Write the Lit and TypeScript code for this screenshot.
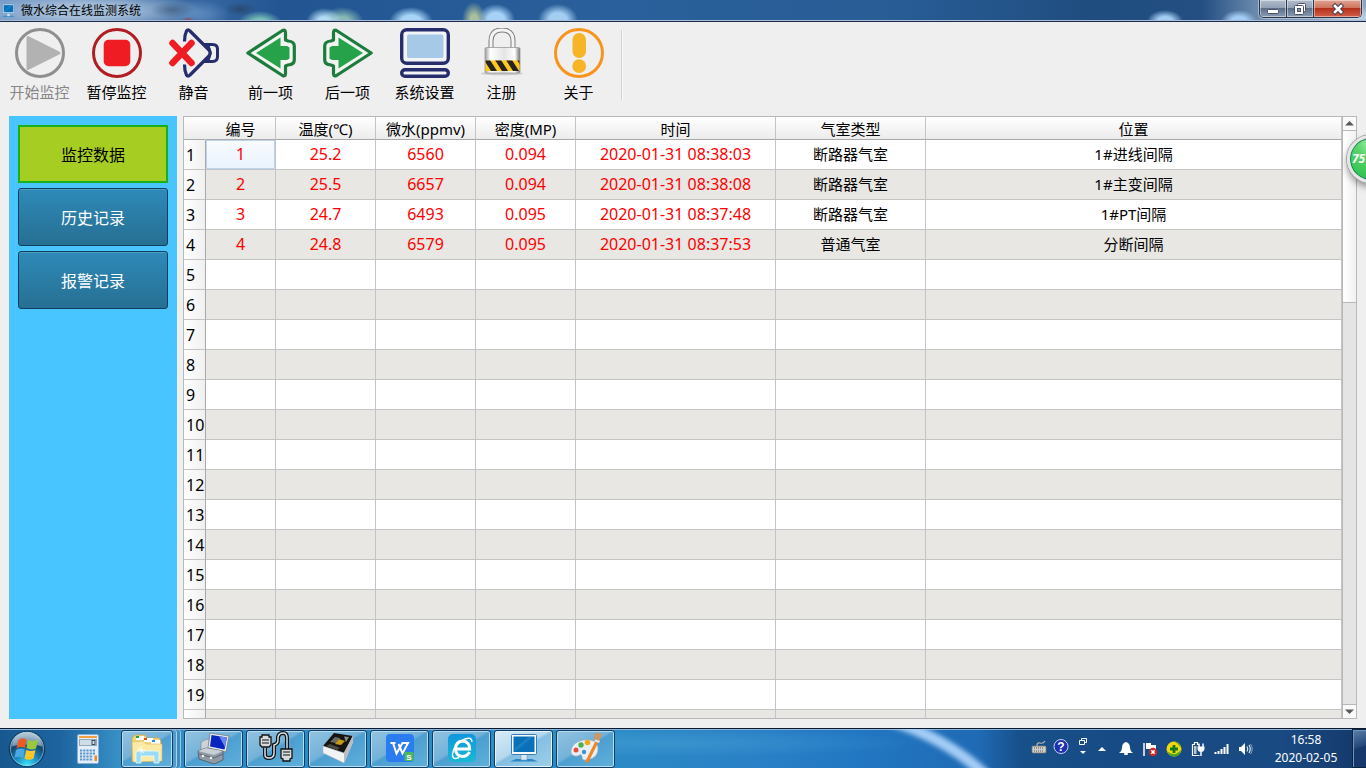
import { LitElement, html, css, svg, nothing } from "lit";
import { customElement, state } from "lit/decorators.js";
import { classMap } from "lit/directives/class-map.js";

interface Reading {
  id: string;
  temperature: string;
  moisture: string;
  density: string;
  time: string;
  chamber: string;
  place: string;
}

const READINGS: Reading[] = [
  { id: "1", temperature: "25.2", moisture: "6560", density: "0.094", time: "2020-01-31 08:38:03", chamber: "断路器气室", place: "1#进线间隔" },
  { id: "2", temperature: "25.5", moisture: "6657", density: "0.094", time: "2020-01-31 08:38:08", chamber: "断路器气室", place: "1#主变间隔" },
  { id: "3", temperature: "24.7", moisture: "6493", density: "0.095", time: "2020-01-31 08:37:48", chamber: "断路器气室", place: "1#PT间隔" },
  { id: "4", temperature: "24.8", moisture: "6579", density: "0.095", time: "2020-01-31 08:37:53", chamber: "普通气室", place: "分断间隔" },
];

const ROW_COUNT = 20;

const arrowShape = svg`
  <path d="M1.8 25 L36.5 2.5 Q39.5 1 39.5 4.5 V12 L42 13 Q48.3 13.5 48.3 18 V32 Q48.3 36.5 42 37 L39.5 38 V45.5 Q39.5 49 36.5 47.5 Z" fill="#f2f4f2" stroke="#1e7b3e" stroke-width="3.2" stroke-linejoin="round"/>
  <path d="M10 25 L34.5 9.5 V18 H41 L43.5 19.5 V30.5 L41 32 H34.5 V40.5 Z" fill="#26a24a"/>`;

const monitorShape = svg`
  <path d="M8 26 H24 L30 28.500 H2 Z" fill="#2a86c8"/>
  <rect x="13" y="21" width="6" height="6" fill="#dbe9f3" stroke="#6f9fc4" stroke-width=".6"/>
  <rect x="3.500" y="1.500" width="25" height="20" rx="1" fill="#f6fafc" stroke="#3a7db4"/>
  <rect x="5.500" y="3.500" width="21" height="15.500" fill="#0a70b8"/>
  <path d="M6 16 L20 4 H25 L8 18 Z" fill="#3a98d8" opacity=".35"/>`;

const toolIcons = {
  play: svg`
    <circle cx="25" cy="25" r="23.500" fill="#efefef" stroke="#8f8f8f" stroke-width="3"/>
    <path d="M13 9.500 L44 25 L13 40.500 Z" fill="#b2b2b2" stroke="#b2b2b2" stroke-width="3" stroke-linejoin="round"/>`,
  stop: svg`
    <circle cx="25" cy="25" r="23.500" fill="#efefef" stroke="#b01e24" stroke-width="3"/>
    <rect x="11.700" y="11.700" width="26.600" height="26.600" rx="5" fill="#f01c24"/>`,
  mute: svg`
    <path d="M35 16.500 H43.500 Q48.500 16.500 48.500 21 V28.500 Q48.500 33.500 43.500 33.500 H35" fill="none" stroke="#262d6c" stroke-width="3"/>
    <path d="M39 17 Q43 25 39 33" fill="none" stroke="#262d6c" stroke-width="2.500"/>
    <path d="M15.500 13.500 Q15.500 7 17.500 3 Q19 .8 21 3 L40 22 Q42.500 25 40 28 L21 47 Q19 49.200 17.500 47 Q15.500 43 15.500 36.500" fill="#efefef" stroke="#262d6c" stroke-width="3.200" stroke-linejoin="round"/>
    <path d="M3.500 15 L22.500 35 M22.500 15 L3.500 35" stroke="#f01c24" stroke-width="6.500" stroke-linecap="round"/>`,
  prev: arrowShape,
  next: svg`<g transform="translate(50 0) scale(-1 1)">${arrowShape}</g>`,
  settings: svg`
    <rect x="1.700" y="1.700" width="46.600" height="33.600" rx="5" fill="#f2f4f6" stroke="#262d6c" stroke-width="3.400"/>
    <rect x="7" y="6.500" width="36.500" height="23.500" rx="2" fill="#a6c9e7"/>
    <rect x="1.700" y="41.700" width="46.600" height="6.600" rx="3.300" fill="#f2f4f6" stroke="#262d6c" stroke-width="3.400"/>`,
  lock: svg`
    <defs>
      <linearGradient id="body" x1="0" x2="1"><stop offset="0" stop-color="#9c9c9c"/><stop offset=".15" stop-color="#fff"/><stop offset=".55" stop-color="#e4e4e4"/><stop offset=".85" stop-color="#fff"/><stop offset="1" stop-color="#707070"/></linearGradient>
      <clipPath id="band"><rect x="8.500" y="32.500" width="34" height="10.500"/></clipPath>
    </defs>
    <ellipse cx="25" cy="45.500" rx="21" ry="1.800" fill="#c9c9c9"/>
    <path d="M14 20 V13 Q14 2 25 2 Q36 2 36 13 V20" fill="none" stroke="#7d7d7d" stroke-width="5"/>
    <path d="M14 20 V13 Q14 2 25 2 Q36 2 36 13 V20" fill="none" stroke="#f4f4f4" stroke-width="3"/>
    <rect x="8" y="19.500" width="35" height="25.500" rx="1.500" fill="url(#body)" stroke="#9a9a9a" stroke-width=".8"/>
    <g clip-path="url(#band)">
      <rect x="8" y="32" width="36" height="12" fill="#ffc81a"/>
      <path d="M7 32 h6 l7 11 h-6 Z M18 32 h6 l7 11 h-6 Z M29 32 h6 l7 11 h-6 Z M40 32 h6 l7 11 h-6 Z M3 38 l5 7 h-6 Z" fill="#262320"/>
    </g>`,
  about: svg`
    <circle cx="25" cy="25" r="23.500" fill="#efefef" stroke="#f7941e" stroke-width="3"/>
    <rect x="18.500" y="5" width="13.500" height="25" rx="6.700" fill="#f6b426"/>
    <circle cx="25.200" cy="38.200" r="6.900" fill="#f6b426"/>`,
};

const TOOLS: { label: string; icon: keyof typeof toolIcons; disabled?: boolean }[] = [
  { label: "开始监控", icon: "play", disabled: true },
  { label: "暂停监控", icon: "stop" },
  { label: "静音", icon: "mute" },
  { label: "前一项", icon: "prev" },
  { label: "后一项", icon: "next" },
  { label: "系统设置", icon: "settings" },
  { label: "注册", icon: "lock" },
  { label: "关于", icon: "about" },
];

@customElement("title-bar")
class TitleBar extends LitElement {
  static styles = css`
    :host {
      display: flex;
      flex: none;
      justify-content: space-between;
      height: 22px;
      box-sizing: border-box;
      border-bottom: 1px solid #1b2b49;
      box-shadow: inset 0 -1px #a9bdd8;
      background:
        radial-gradient(ellipse 38px 12px at 1356px 18px, #b9cde2 20%, transparent),
        radial-gradient(ellipse 18px 11px at 1165px 21px, #a3cdf4 40%, transparent),
        radial-gradient(ellipse 18px 11px at 1239px 21px, #a3cdf4 40%, transparent),
        radial-gradient(ellipse 18px 14px at 324px 22px, #b1dcf3 35%, transparent),
        radial-gradient(ellipse 22px 15px at 342px 22px, #86b9b3 35%, transparent),
        radial-gradient(ellipse 22px 15px at 411px 22px, #a6d5f7 45%, transparent),
        radial-gradient(ellipse 12px 18px at 474px 20px, #a9bf9d 30%, transparent),
        radial-gradient(ellipse 19px 16px at 496px 20px, #a6d2f7 45%, transparent),
        radial-gradient(ellipse 20px 16px at 558px 20px, #a3cdf1 45%, transparent),
        radial-gradient(ellipse 22px 12px at 260px 23px, #78bfb6 35%, transparent),
        radial-gradient(ellipse 16px 7px at 240px 9px, #28415f99 10%, transparent),
        radial-gradient(ellipse 7px 4px at 188px 21px, #9c4260 20%, transparent),
        radial-gradient(ellipse 22px 8px at 172px 10px, #35506f88 10%, transparent),
        radial-gradient(ellipse 30px 14px at 200px 14px, #6b98cb99 20%, transparent),
        radial-gradient(ellipse 120px 20px at 85px 11px, #a3bcd8 35%, transparent),
        linear-gradient(90deg, #6d95c4 0, #225592 280px, #2a609b 45%, #285d96 65%, #204d80 80%, #234f83 88%, #7d98b8 93%, #8ba6c4);
    }
    .title {
      display: flex;
      align-items: center;
      gap: 5px;
      padding-left: 1px;
      font-size: 12px;
      line-height: 18px;
      color: #000;
    }
    .controls {
      display: flex;
      height: 18px;
      margin-right: 4px;
      border: 1px solid #2b3648;
      border-top: 0;
      border-radius: 0 0 5px 5px;
      overflow: hidden;
      box-sizing: border-box;
      box-shadow: 0 0 0 1px #d0dae688;
    }
    .control {
      width: 27px;
      padding: 0;
      border: 0;
      border-right: 1px solid #2b3648;
      box-shadow: inset 0 0 0 1px #ffffff70;
      background: linear-gradient(#b1bccb 0, #93a2b6 45%, #5c6f89 50%, #8b9db5);
      display: grid;
      place-items: center;
    }
    .close {
      width: 47px;
      border-right: 0;
      background: linear-gradient(#e0a493 0, #cf7460 45%, #b4301a 50%, #d2604a);
    }
  `;

  render() {
    return html`
      <span class="title">
        <svg width="15" height="15" viewBox="0 0 32 30">${monitorShape}</svg>
        <span>微水综合在线监测系统</span>
      </span>
      <div class="controls">
        <button class="control" aria-label="最小化">
          <svg width="14" height="14" viewBox="0 0 14 14"><rect x="1.500" y="7.500" width="11" height="4" rx="1" fill="#fff" stroke="#4a5261"/></svg>
        </button>
        <button class="control" aria-label="还原">
          <svg width="14" height="14" viewBox="0 0 14 14">
            <rect x="4.500" y="1.500" width="8" height="8" rx="1" fill="#fff" stroke="#4a5261"/>
            <rect x="1.500" y="3.500" width="9" height="9" rx="1" fill="#fff" stroke="#4a5261"/>
            <rect x="4.500" y="6.500" width="3" height="3" fill="#8b9db5" stroke="#4a5261"/>
          </svg>
        </button>
        <button class="control close" aria-label="关闭">
          <svg width="14" height="14" viewBox="0 0 14 14">
            <path d="M4 4 L10 10 M10 4 L4 10" stroke="#4a4450" stroke-width="4.600" stroke-linecap="square"/>
            <path d="M4 4 L10 10 M10 4 L4 10" stroke="#fff" stroke-width="2.600" stroke-linecap="square"/>
          </svg>
        </button>
      </div>
    `;
  }
}

@customElement("tool-bar")
class ToolBar extends LitElement {
  static styles = css`
    :host {
      display: flex;
      flex: none;
      align-items: flex-start;
      padding: 6px 1px 13px;
    }
    .tool {
      display: flex;
      flex-direction: column;
      align-items: center;
      gap: 3px;
      width: 77px;
      padding: 0;
      border: 0;
      background: none;
      font: inherit;
      font-size: 15px;
      line-height: 22px;
      color: #000;
      white-space: nowrap;
    }
    .tool:disabled {
      color: #868686;
    }
    .separator {
      width: 1px;
      height: 70px;
      margin: 2px 0 0 4px;
      background: #d2d2d2;
      border-right: 1px solid #fafafa;
    }
  `;

  render() {
    return html`
      ${TOOLS.map(
        (tool) => html`
          <button class="tool" ?disabled=${tool.disabled ?? false}>
            <svg width="50" height="50" viewBox="0 0 50 50">${toolIcons[tool.icon]}</svg>
            <span>${tool.label}</span>
          </button>
        `,
      )}
      <span class="separator"></span>
    `;
  }
}

@customElement("side-nav")
class SideNav extends LitElement {
  static styles = css`
    :host {
      display: block;
      background: #48c5ff;
      padding: 9px;
    }
    .list {
      display: flex;
      flex-direction: column;
      gap: 5px;
    }
    .entry {
      height: 58px;
      padding: 2px 0 0;
      border: 1px solid #0e3f5e;
      border-radius: 3px;
      background: linear-gradient(#2e8ab8, #276f93);
      box-shadow: inset 0 1px #4c9cc3;
      font: inherit;
      font-size: 16px;
      line-height: 22px;
      color: #fff;
    }
    .active {
      border: 2px solid #16b11c;
      border-radius: 0;
      background: #a6cd22;
      box-shadow: none;
      color: #000;
    }
  `;

  @state() private active = 0;

  render() {
    return html`
      <nav class="list">
        ${["监控数据", "历史记录", "报警记录"].map(
          (label, index) => html`
            <button
              class=${classMap({ entry: true, active: index === this.active })}
              @click=${() => (this.active = index)}
            >${label}</button>
          `,
        )}
      </nav>
    `;
  }
}

@customElement("reading-grid")
class ReadingGrid extends LitElement {
  static styles = css`
    :host {
      display: flex;
      min-width: 0;
      border: 1px solid #b8b8b8;
      overflow: hidden;
      background: #fff;
    }
    .viewport {
      flex: 1;
      min-width: 0;
      overflow: hidden;
    }
    .table {
      width: 100%;
      table-layout: fixed;
      border-collapse: separate;
      border-spacing: 0;
      font-size: 15px;
      line-height: 22px;
      color: #000;
    }
    .table th,
    .table td {
      box-sizing: border-box;
      padding: 0 0 2px;
      border-right: 1px solid #c4c4c4;
      border-bottom: 1px solid #c4c4c4;
      font-weight: normal;
      text-align: center;
      white-space: nowrap;
    }
    .table .head {
      height: 23px;
      padding: 1px 0 0;
      line-height: 20px;
      border-bottom-color: #a9a9a9;
      background: linear-gradient(#fff, #ececec);
    }
    .table .corner {
      border-right-color: transparent;
    }
    .row {
      height: 30px;
    }
    .row:nth-child(even) {
      background: #e8e7e3;
    }
    .table .index {
      padding: 0 0 0 2px;
      border-right-color: #a9a9a9;
      background: linear-gradient(90deg, #fff, #f0f0f0);
      font-size: 16px;
      text-align: left;
    }
    .table .value {
      font-size: 16px;
      color: #f00;
    }
    .table .focused {
      background: linear-gradient(#f9fcff, #e9f2fc);
      box-shadow: inset 0 0 0 1px #bcd4ee;
    }
    .c-index { width: 22px; }
    .c-id { width: 70px; }
    .c-small { width: 100px; }
    .c-time { width: 200px; }
    .c-type { width: 150px; }
    .scrollbar {
      display: flex;
      flex-direction: column;
      flex: none;
      width: 13px;
      border-left: 1px solid #b8b8b8;
      background: #e4e4e4;
    }
    .step {
      display: grid;
      place-items: center;
      height: 13px;
      padding: 0;
      border: 0;
      background: #fafafa;
    }
    .track {
      flex: 1;
      border-top: 1px solid #b8b8b8;
      border-bottom: 1px solid #b8b8b8;
    }
    .thumb {
      height: 30%;
      box-sizing: border-box;
      border-bottom: 1px solid #b8b8b8;
      background: linear-gradient(90deg, #fff, #f1f1f1);
    }
  `;

  render() {
    const rows = Array.from({ length: ROW_COUNT }, (_, i) => READINGS[i]);
    return html`
      <div class="viewport">
        <table class="table">
          <colgroup>
            <col class="c-index" /><col class="c-id" /><col class="c-small" /><col class="c-small" />
            <col class="c-small" /><col class="c-time" /><col class="c-type" /><col />
          </colgroup>
          <thead>
            <tr>
              <td class="head corner"></td>
              ${["编号", "温度(℃)", "微水(ppmv)", "密度(MP)", "时间", "气室类型", "位置"].map(
                (name) => html`<th class="head" scope="col">${name}</th>`,
              )}
            </tr>
          </thead>
          <tbody>
            ${rows.map(
              (r, i) => html`
                <tr class="row">
                  <th class="index" scope="row">${i < ROW_COUNT - 1 ? i + 1 : nothing}</th>
                  <td class=${classMap({ value: true, focused: i === 0 })}>${r?.id}</td>
                  <td class="value">${r?.temperature}</td>
                  <td class="value">${r?.moisture}</td>
                  <td class="value">${r?.density}</td>
                  <td class="value">${r?.time}</td>
                  <td>${r?.chamber}</td>
                  <td>${r?.place}</td>
                </tr>
              `,
            )}
          </tbody>
        </table>
      </div>
      <div class="scrollbar">
        <button class="step" aria-label="向上滚动">
          <svg width="9" height="5" viewBox="0 0 9 5"><path d="M0 4.500 L4.500 0 L9 4.500 Z" fill="#5a5a5a"/></svg>
        </button>
        <div class="track"><div class="thumb"></div></div>
        <button class="step" aria-label="向下滚动">
          <svg width="9" height="5" viewBox="0 0 9 5"><path d="M0 .5 L4.500 5 L9 .5 Z" fill="#5a5a5a"/></svg>
        </button>
      </div>
    `;
  }
}

const calculatorIcon = svg`
  <rect x="5.500" y="1.500" width="21" height="29" rx="1.500" fill="#e3eefa" stroke="#86aed8"/>
  <rect x="7" y="3" width="18" height="2" fill="#f0a040"/>
  <rect x="7.500" y="6.500" width="17" height="6" fill="#cfdde8" stroke="#8fa7bd"/>
  <rect x="20" y="7.500" width="3" height="4" fill="none" stroke="#3c4e62"/>
  <path d="M8 17.500 H24 M8 20.500 H24 M8 23.500 H21 M8 26.500 H21" stroke="#5c92cc" stroke-width="2" stroke-dasharray="2.200 1"/>
  <rect x="22.500" y="22.500" width="2.500" height="5.500" fill="#f08a1c"/>`;

const taskIcons = [
  {
    label: "资源管理器",
    art: svg`
      <path d="M1 5 L4 2 H14 L16 5 H28 L30 8 V28 H1 Z" fill="#f3d67c" stroke="#c9a248" stroke-width=".7"/>
      <rect x="5" y="3" width="8" height="4" fill="#fff"/><rect x="5" y="3" width="3" height="2" fill="#18a838"/>
      <rect x="13" y="5" width="9" height="4" fill="#fff"/><rect x="13" y="5" width="3" height="2" fill="#e04a20"/>
      <rect x="20" y="7" width="9" height="4" fill="#fff"/><rect x="21" y="7" width="3" height="2" fill="#2a90e0"/>
      <path d="M1 9 L12 8 L15 11 H31 V28 L2 29 Z" fill="#fbeaa6" stroke="#d8b65c" stroke-width=".6"/>
      <path d="M5 30 V20 Q5 18 8 18 H25 Q28 18 28 20 V30 H23 V23 H10 V30 Z" fill="#9bdcf5" stroke="#e8fbff" stroke-width=".8"/>
      <path d="M10 13 V21 M6 17 H14 M7 14 L13 20" stroke="#fff" stroke-width=".8"/>`,
  },
  {
    label: "系统工具",
    art: svg`
      <path d="M3 9 L9 6 L12 8 V20 L3 19 Z" fill="#cfd3d8" stroke="#7b8490" stroke-width=".6"/>
      <path d="M12 0 L31 3 L28 19 L10 15 Z" fill="#e6eaee" stroke="#66707c" stroke-width=".7"/>
      <path d="M13.500 2 L29 4.500 L26.500 16.500 L12 13.500 Z" fill="#0a24c0"/>
      <path d="M21 3.200 L29 4.500 L27 14 Z" fill="#6a86f0"/>
      <path d="M0 18 L8 15 L25 18 V27 L16 31 L1 26 Z" fill="#8f9aa5" stroke="#4f5962" stroke-width=".8"/>
      <path d="M0 18 L8 15 L25 18 L16 22 Z" fill="#c8d0d6"/>
      <path d="M1 21 L16 25 L25 21" fill="none" stroke="#5a656e"/><circle cx="5" cy="23" r="1.300" fill="#e8ecef"/><circle cx="13" cy="25" r="1.300" fill="#e8ecef"/>`,
  },
  {
    label: "串口连接",
    art: svg`
      <path d="M5 15 V22 Q5 25 9 25 Q14 25 14 20 V12 Q18 11 18 7 V4 Q19 0 23 0 Q27 0 27 5 V16" fill="none" stroke="#111" stroke-width="4"/>
      <path d="M5 15 V22 Q5 25 9 25 Q14 25 14 20 V12 Q18 11 18 7 V4 Q19 0 23 0 Q27 0 27 5 V16" fill="none" stroke="#d9e2e8" stroke-width="1.500"/>
      <path d="M2 2 H9 V4 H11 V12 L9 14 H2 L0 12 V4 H2 Z" fill="#d8dadc" stroke="#111" stroke-width="1.300"/>
      <path d="M2 7 H9 M2 10 H9" stroke="#111"/>
      <path d="M21 16 H32 V25 L30 26 V28 H23 V26 L21 25 Z" fill="#d8dadc" stroke="#111" stroke-width="1.300"/>
      <path d="M23 19 H30 M23 22 H30" stroke="#111"/>`,
  },
  {
    label: "芯片工具",
    art: svg`
      <path d="M1 13 L12 0 L31 3 L22 20 Z" fill="#17140f"/>
      <path d="M1 13 L22 20 L31 3 V9 L22 30 L1 20 Z" fill="#f2f3f4" stroke="#a8acb0" stroke-width=".5"/>
      <path d="M22 20 L31 3 V9 L22 30 Z" fill="#b9bdc1"/>
      <path d="M8 9 L13 4 L18 5 L14 10 Z" fill="#6a6a66"/><path d="M13 11 L17 6 L23 8 L19 12 Z" fill="#c79a1c"/>
      <path d="M22 3.500 L27 4 L24 9 Z" fill="#8d8d88"/><path d="M4 13 L8 11 L18 15 L15 17 Z" fill="#4b4a45"/>`,
  },
  {
    label: "WPS 表格",
    art: svg`
      <rect x="2" y="1" width="28" height="28" rx="4" fill="#2a7cf0"/>
      <path d="M6.500 10 H11.500 M9 10 L12.500 20.500 L18.500 10 H24 L18.500 20.500 L14.500 11" fill="none" stroke="#fff" stroke-width="2"/>
      <rect x="20.500" y="19" width="9" height="9" rx="1" fill="#4cb85a"/>
      <text x="25" y="26.500" font-size="8" font-weight="bold" font-family="Liberation Sans, sans-serif" text-anchor="middle" fill="#fff">S</text>`,
  },
  {
    label: "浏览器",
    art: svg`
      <defs><linearGradient id="ie" x1="0" y1="0" x2="0" y2="1"><stop offset="0" stop-color="#1096dc"/><stop offset="1" stop-color="#18b9d4"/></linearGradient></defs>
      <rect x="2" y="1" width="28" height="28" rx="5" fill="url(#ie)"/>
      <path d="M23.500 19 Q21 23.500 16.500 23.500 Q9.500 23 9.500 15.500 Q10 8.500 16.500 8 Q23.500 8.500 23.700 16 H11" fill="none" stroke="#fff" stroke-width="3"/>
      <path d="M26 9 Q26 3.500 19 6 Q8 11 6.500 21 Q6 27.500 13 24.500" fill="none" stroke="#fff" stroke-width="1.400"/>`,
  },
  { label: "微水监测", art: monitorShape, current: true },
  {
    label: "画图",
    art: svg`
      <path d="M13 7 Q26 5 28 14 Q29 25 17 27 Q12 28 12 24 Q12 20 8 23 Q0 24 1 17 Q3 9 13 7 Z" fill="#e8f0f6" stroke="#93acc0" stroke-width=".8"/>
      <circle cx="6" cy="17" r="2.500" fill="#e64c3c"/><circle cx="11" cy="12" r="2.700" fill="#4cb04c"/><circle cx="17.500" cy="9.500" r="2.800" fill="#f0a81c"/><circle cx="14" cy="19" r="2.200" fill="#3c94d4"/>
      <path d="M26 7 L29 8 L18 30 L15 29 Z" fill="#ee8526"/><path d="M24 8 L24 1 Q28 -1 32 1 Q30 5 29.500 9 Z" fill="#c89a6a"/><path d="M25 6.500 L30 8 L29 10 L24.500 8.500 Z" fill="#e4e6e8"/>`,
  },
];

const trayIcons = [
  { label: "键盘", width: 22, art: svg`<rect x="1" y="5" width="14" height="7" rx="1" fill="#d0d0cc" stroke="#77736c" stroke-width=".8"/><path d="M3 7 H13 M3 10 H13" stroke="#55524e" stroke-dasharray="1 1"/><path d="M6 5 Q6 1 9 2 Q12 3 14 0" fill="none" stroke="#b9b7b0" stroke-width="1.200"/>` },
  { label: "帮助", width: 22, art: svg`<circle cx="8" cy="5.500" r="7" fill="#1c30b0" stroke="#c8d0f0"/><text x="8" y="10" font-size="12" font-weight="bold" font-family="Liberation Sans, sans-serif" text-anchor="middle" fill="#fff">?</text>` },
  { label: "还原语言栏", width: 22, art: svg`<path d="M6.500 -1 V-2.500 H11.500 V1.500 H10 M4.500 -.5 H9.500 V3.500 H4.500 Z" fill="none" stroke="#fff"/><path d="M5 10 H11 L8 13 Z" fill="#fff"/>` },
  { label: "显示隐藏的图标", width: 20, art: svg`<path d="M2 10 H10 L6 6 Z" fill="#fff"/>` },
  { label: "通知", width: 24, art: svg`<path d="M8 1 Q12 2 12 7 Q12 10 15 12 H1 Q4 10 4 7 Q4 2 8 1 Z" fill="#fff"/><rect x="6" y="12" width="4" height="2" rx="1" fill="#fff"/>` },
  { label: "操作中心", width: 24, art: svg`<path d="M2 2 V15" stroke="#fff" stroke-width="1.500"/><path d="M4 2 H9 V4 H14 V10 H9 V8 H4 Z" fill="#fff"/><circle cx="11" cy="11" r="4.300" fill="#c82a24"/><path d="M9.300 9.300 L12.700 12.700 M12.700 9.300 L9.300 12.700" stroke="#fff" stroke-width="1.500"/>` },
  { label: "安全卫士", width: 24, art: svg`<circle cx="8" cy="8" r="7.500" fill="#f3d90c"/><path d="M1 10 Q8 17 15 9 Q14 15.500 8 15.500 Q3 15.500 1 10 Z M8 .5 Q14 1 15 7 Q12 2 8 .5 Z" fill="#43a526"/><path d="M8 4 V12 M4 8 H12" stroke="#147a1a" stroke-width="2.800"/>` },
  { label: "电源", width: 24, art: svg`<path d="M9 3.500 H7.500 V1.500 H4.500 V3.500 H2.500 V14.500 H9.500" fill="none" stroke="#fff" stroke-width="1.200"/><path d="M4 5 H6.500 V13 H4 Z" fill="#fff" opacity=".7"/><path d="M9 2.500 V6 M13 2.500 V6" stroke="#fff" stroke-width="1.500"/><path d="M7.500 5.500 H14.500 V8 Q14 11 11 11 Q8 11 7.500 8 Z" fill="#fff"/><path d="M11 11 V15" stroke="#fff" stroke-width="1.500"/>` },
  { label: "网络", width: 24, art: svg`<path d="M1.500 13 V11 M4.500 13 V10 M7.500 13 V8 M10.500 13 V6 M13.500 13 V3" stroke="#fff" stroke-width="2"/>` },
  { label: "音量", width: 24, art: svg`<path d="M1 6 H3 L7 2 V14 L3 10 H1 Z" fill="#fff"/><path d="M9 5.500 Q10.500 8 9 10.500 M11 4 Q13.500 8 11 12" fill="none" stroke="#dfe8f2" stroke-width="1.200"/><path d="M12.500 3 Q16 8 12.500 13" fill="none" stroke="#8fa9c6"/>` },
];

@customElement("task-bar")
class TaskBar extends LitElement {
  static styles = css`
    :host {
      display: flex;
      flex: none;
      height: 40px;
      box-sizing: border-box;
      border-top: 1px solid #0c1a30;
      box-shadow: inset 0 1px #90b6dc;
      overflow: hidden;
      background:
        radial-gradient(ellipse 260px 14px at 660px 14px, #46a0d488 0, transparent),
        linear-gradient(90deg, #17588f 0, #1d649f 60px, #3c98cc 130px, #2b8bc6 190px, #2b8ac6 620px, #2a80c6 760px, #2277c2 860px, #1f6ab4 980px, #17508a 1020px, #174a84 1130px, #1a4a82 1280px, #14386a 100%);
    }
    .start {
      display: grid;
      place-items: center;
      width: 54px;
      padding: 0;
      border: 0;
      background: none;
    }
    .pinned {
      display: grid;
      place-items: center;
      width: 67px;
      padding: 0;
      border: 0;
      background: none;
    }
    .tasks {
      display: flex;
      gap: 3px;
      padding-top: 1px;
    }
    .task {
      display: grid;
      place-items: center;
      width: 59px;
      height: 38px;
      padding: 0;
      border: 1px solid #0f3d63;
      border-radius: 3px;
      background: linear-gradient(150deg, #93c3e0 0, #74b2d9 45%, #4d9fd0 50%, #5fb0db);
      box-shadow: inset 0 0 0 1px #b8dcf0;
    }
    .grouped {
      width: 52px;
      margin-right: 8px;
      box-shadow: inset 0 0 0 1px #b8dcf0, 3px 0 #4f9ccb, 4px 0 #a8d4ec, 7px 0 #3f8cbe, 8px 0 #98c8e4;
    }
    .current {
      background: linear-gradient(150deg, #d9ecf7 0, #b5d8ee 45%, #84bfe2 50%, #9dd0ea);
      box-shadow: inset 0 0 0 1px #e6f5fc;
    }
    .streak {
      flex: 1;
      min-width: 0;
      height: 39px;
    }
    .tray {
      display: flex;
      align-items: center;
    }
    .notice {
      display: grid;
      place-items: center;
      height: 24px;
      padding: 0;
      border: 0;
      background: none;
      overflow: visible;
    }
    .art {
      overflow: visible;
    }
    .clock {
      width: 94px;
      box-sizing: border-box;
      padding: 2px 0 0 2px;
      font-size: 12px;
      line-height: 18px;
      text-align: center;
      color: #fff;
    }
    .desktop {
      width: 14px;
      padding: 0;
      border: 1px solid #0b2444;
      border-right: 0;
      box-shadow: inset 1px 1px #6f93bd;
      background: linear-gradient(160deg, #5c7fa8, #24497a 45%, #17386a 50%);
    }
    .w20 { width: 20px; }
    .w22 { width: 22px; }
    .w24 { width: 24px; }
  `;

  render() {
    return html`
      <button class="start" aria-label="开始">
        <svg width="38" height="38" viewBox="0 0 38 38">
          <defs>
            <radialGradient id="orb" cx=".5" cy=".95" r=".95"><stop offset="0" stop-color="#3fe4fa"/><stop offset=".35" stop-color="#1b8ac0"/><stop offset=".65" stop-color="#14456e"/><stop offset="1" stop-color="#b0c8da"/></radialGradient>
          </defs>
          <circle cx="19" cy="19" r="17.800" fill="url(#orb)" stroke="#0d3558"/>
          <circle cx="19" cy="19" r="16.500" fill="none" stroke="#bfe0f0" opacity=".5"/>
          <path d="M4 16 Q6 3 19 3 Q32 3 34 16 Q19 13 4 16 Z" fill="#dce9f2" opacity=".45"/>
          <path d="M10.500 10 Q14 7 18.500 9.500 L17 18 Q12.500 16 8.500 18.500 Z" fill="#ee5a26"/>
          <path d="M20 10 Q25 12 30 9.500 L28 18.500 Q23 20.500 18.500 18 Z" fill="#9aca3c"/>
          <path d="M8 20 Q12.500 17.500 16.800 19.500 L15 28 Q11 25.500 6.500 28 Z" fill="#4aa8e6"/>
          <path d="M18.200 20 Q23 22 27.500 20 L25.500 28.500 Q21 31 16.500 28.500 Z" fill="#fcc62a"/>
        </svg>
      </button>
      <button class="pinned" aria-label="计算器">
        <svg width="32" height="32" viewBox="0 0 32 32">${calculatorIcon}</svg>
      </button>
      <div class="tasks">
        ${taskIcons.map(
          (task, i) => html`
            <button
              class=${classMap({ task: true, grouped: i === 0, current: !!task.current })}
              aria-label=${task.label}
            >
              <svg class="art" width="32" height="32" viewBox="0 0 32 32">${task.art}</svg>
            </button>
          `,
        )}
      </div>
      <svg class="streak" viewBox="0 0 412 39" preserveAspectRatio="none">
        <defs><filter id="soft" x="-20%" y="-50%" width="140%" height="200%"><feGaussianBlur stdDeviation="2.500"/></filter></defs>
        <path d="M276 -8 Q332 10 372 48" fill="none" stroke="#a4cdf6" stroke-width="11" filter="url(#soft)"/>
      </svg>
      <div class="tray">
        ${trayIcons.map(
          (item) => html`
            <button class=${classMap({ notice: true, [`w${item.width}`]: true })} aria-label=${item.label}>
              <svg class="art" width="16" height="16" viewBox="0 0 16 16">${item.art}</svg>
            </button>
          `,
        )}
      </div>
      <div class="clock">
        <div>16:58</div>
        <div>2020-02-05</div>
      </div>
      <button class="desktop" aria-label="显示桌面"></button>
    `;
  }
}

@customElement("app-root")
class AppRoot extends LitElement {
  static styles = css`
    :host {
      position: relative;
      display: flex;
      flex-direction: column;
      height: 100vh;
      overflow: hidden;
      background: #efefef;
      font-family: "Noto Sans", "Noto Sans CJK SC", sans-serif;
    }
    .main {
      flex: 1;
      min-height: 0;
      display: grid;
      grid-template-columns: 168px minmax(0, 1fr);
      grid-template-rows: minmax(0, 1fr);
      gap: 6px;
      padding: 0 9px 9px;
    }
    .ball {
      position: absolute;
      top: 135px;
      right: -29px;
      width: 48px;
      height: 48px;
      box-sizing: border-box;
      padding: 0 0 0 2px;
      border: 3px solid #e4e6e6;
      border-radius: 50%;
      background: radial-gradient(circle at 50% 10%, #a5ecae 0, #55d468 35%, #3cc957 70%, #2fa860);
      box-shadow: 0 0 0 1px #a3a3a3, 0 4px 7px #00000066, inset 0 0 0 1px #12805a;
      font: inherit;
      font-size: 12px;
      font-weight: bold;
      font-style: italic;
      line-height: 14px;
      text-align: left;
      color: #fff;
    }
  `;

  render() {
    return html`
      <title-bar></title-bar>
      <tool-bar></tool-bar>
      <main class="main">
        <side-nav></side-nav>
        <reading-grid></reading-grid>
      </main>
      <task-bar></task-bar>
      <button class="ball">75</button>
    `;
  }
}
